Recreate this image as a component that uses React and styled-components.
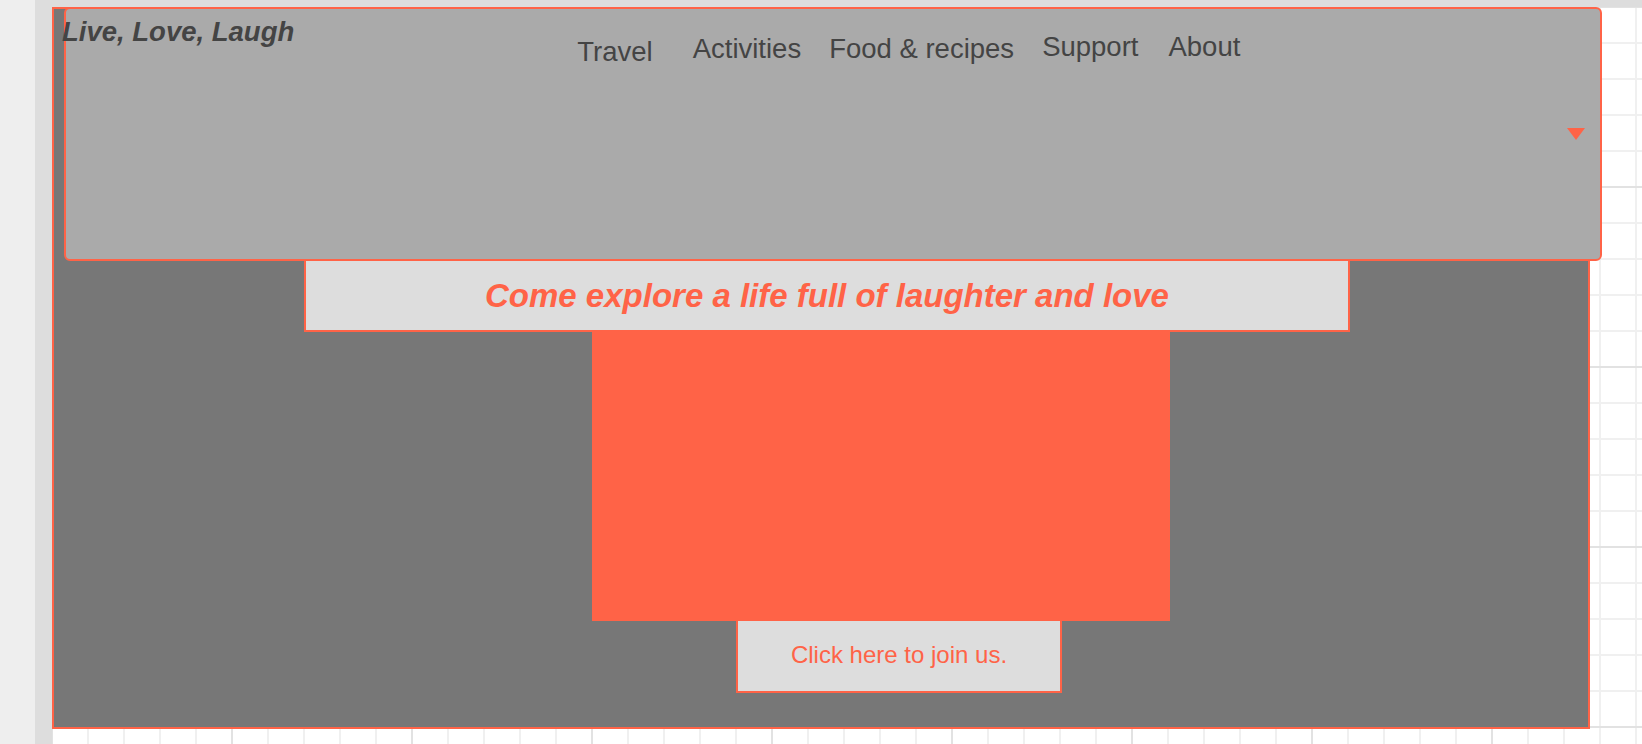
import React from "react";
import styled, { createGlobalStyle } from "styled-components";

const GlobalStyle = createGlobalStyle`
  html, body {
    margin: 0;
    padding: 0;
  }
  body {
    font-family: "Liberation Sans", Arial, sans-serif;
    overflow: hidden;
  }
`;

// page frame //
const Page = styled.div`
  display: flex;
  height: 100vh;
  background-color: #eee;
`;

const LeftRail = styled.div`
  width: 35px;
  flex-shrink: 0;
  background-color: #eee;
`;

const Canvas = styled.div`
  flex: 1;
  display: flex;
  padding: 7px 0 0 17px;
  background-color: #ddd;
  min-width: 0;
`;

const Grid = styled.div`
  flex: 1;
  background-color: #fff;
  background-image:
    linear-gradient(to right, #e2e2e2 2px, transparent 2px),
    linear-gradient(to bottom, #e2e2e2 2px, transparent 2px),
    linear-gradient(to right, #f0f0f0 2px, transparent 2px),
    linear-gradient(to bottom, #f0f0f0 2px, transparent 2px);
  background-size: 180px 180px, 180px 180px, 36px 36px, 36px 36px;
  background-position: -1px -1px;
`;

// hero section
const Hero = styled.section`
  width: 1538px;
  box-sizing: border-box;
  display: flex;
  flex-direction: column;
  align-items: flex-start;
  padding-bottom: 34px;
  background-color: #777;
  border: 2px solid tomato;
`;

// Header bar
const Header = styled.header`
  display: flex;
  align-items: flex-start;
  width: 1538px;
  height: 254px;
  box-sizing: border-box;
  margin: -2px 0 0 10px;
  background-color: #aaa;
  border: 2px solid tomato;
  border-radius: 6px;
`;

const Logo = styled.div`
  margin: 7px 0 0 -4px;
  font-size: 27.5px;
  font-weight: bold;
  font-style: italic;
  color: #444;
  white-space: nowrap;
`;

const NavMenu = styled.ul`
  display: flex;
  align-items: flex-start;
  gap: 28px;
  list-style: none;
  margin: 0 0 0 283px;
  padding: 0;
`;

const NavItem = styled.li`
  margin-top: ${(p) => p.$drop}px;
  margin-right: ${(p) => p.$extra || 0}px;
  font-size: 27.5px;
`;

const NavLink = styled.a`
  text-decoration: none;
  color: #444;
  white-space: nowrap;
`;

const Caret = styled.span`
  align-self: center;
  margin: 0 15px 0 auto;
  width: 0;
  height: 0;
  border-left: 9px solid transparent;
  border-right: 9px solid transparent;
  border-top: 12px solid tomato;
`;

const Tagline = styled.h2`
  display: flex;
  align-items: center;
  justify-content: center;
  width: 1046px;
  height: 73px;
  box-sizing: border-box;
  margin: -2px 0 0 250px;
  padding-top: 1px;
  background-color: #ddd;
  border: 2px solid tomato;
  color: tomato;
  font-size: 33px;
  font-weight: bold;
  font-style: italic;
  white-space: nowrap;
`;

const Picture = styled.div`
  width: 578px;
  height: 289px;
  margin-left: 538px;
  background-color: tomato;
`;

const JoinButton = styled.button`
  width: 326px;
  height: 72px;
  box-sizing: border-box;
  margin-left: 682px;
  padding: 0 0 2px;
  background-color: #ddd;
  border: 2px solid tomato;
  border-top-width: 0;
  color: tomato;
  font-family: "Liberation Sans", Arial, sans-serif;
  font-size: 24px;
  cursor: pointer;
`;

const links = [
  { label: "Travel", drop: 27, extra: 12 },
  { label: "Activities", drop: 24 },
  { label: "Food & recipes", drop: 24 },
  { label: "Support", drop: 22, extra: 2 },
  { label: "About", drop: 22 },
];

const App = () => {
  return (
    <>
      <GlobalStyle />
      <Page>
        <LeftRail />
        <Canvas>
          <Grid>
            <Hero>
              <Header>
                <Logo>Live, Love, Laugh</Logo>
                <NavMenu>
                  {links.map((l) => (
                    <NavItem key={l.label} $drop={l.drop} $extra={l.extra}>
                      <NavLink href="#">{l.label}</NavLink>
                    </NavItem>
                  ))}
                </NavMenu>
                <Caret />
              </Header>
              <Tagline>Come explore a life full of laughter and love</Tagline>
              <Picture />
              <JoinButton>Click here to join us.</JoinButton>
            </Hero>
          </Grid>
        </Canvas>
      </Page>
    </>
  );
};

export default App;
